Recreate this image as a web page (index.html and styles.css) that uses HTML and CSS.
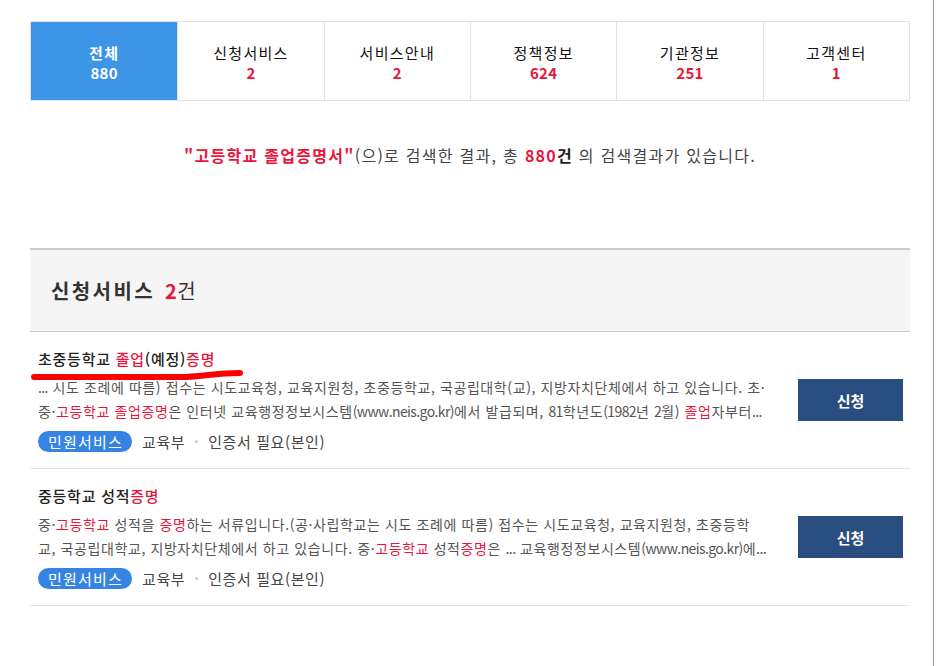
FILE: index.html
```html
<!DOCTYPE html>
<html lang="ko">
  <head>
    <meta charset="UTF-8" />
    <meta name="viewport" content="width=device-width, initial-scale=1.0" />
    <title>통합검색 결과</title>
    <link rel="stylesheet" href="styles.css">
  </head>
  <body>
    <div class="page">
      <div class="wrap">
        <!-- 검색 분류 탭 -->
        <ul class="tabs">
          <li class="tab active"><span class="tab-name">전체</span><span class="tab-count">880</span></li>
          <li class="tab"><span class="tab-name">신청서비스</span><span class="tab-count">2</span></li>
          <li class="tab"><span class="tab-name">서비스안내</span><span class="tab-count">2</span></li>
          <li class="tab"><span class="tab-name">정책정보</span><span class="tab-count">624</span></li>
          <li class="tab"><span class="tab-name">기관정보</span><span class="tab-count">251</span></li>
          <li class="tab"><span class="tab-name">고객센터</span><span class="tab-count">1</span></li>
        </ul>

        <p class="summary">
          <strong class="hl">"고등학교 졸업증명서"</strong>(으)로 검색한 결과, 총 <strong class="hl">880</strong><strong>건</strong> 의 검색결과가 있습니다.
        </p>

        <!-- 신청서비스 결과 -->
        <div class="section-head">
          <h2>신청서비스 <em>2</em><span>건</span></h2>
        </div>

        <ul class="results">
          <li class="result">
            <div class="result-body">
              <h3 class="result-title">초중등학교 <span class="hl">졸업</span>(예정)<span class="hl">증명</span></h3>
              <svg class="mark" width="218" height="16" viewBox="0 0 218 16">
                <path d="M4 11 L150 11 C 170 11, 185 7, 210 7" stroke="#f00" stroke-width="6" fill="none" stroke-linecap="round" />
              </svg>
              <div class="result-desc">
                <p class="line"><span class="en">...</span> 시도 조례에 따름) 접수는 시도교육청, 교육지원청, 초중등학교, 국공립대학(교), 지방자치단체에서 하고 있습니다. 초·</p>
                <p class="line">중·<span class="hl">고등학교</span> <span class="hl">졸업증명</span>은 인터넷 교육행정정보시스템<span class="en">(www.neis.go.kr)</span>에서 발급되며, <span class="en">81</span>학년도<span class="en">(1982</span>년 <span class="en">2</span>월) <span class="hl">졸업</span>자부터<span class="en">...</span></p>
              </div>
              <div class="result-meta">
                <span class="badge">민원서비스</span>
                <span class="meta">교육부</span>
                <span class="dot"></span>
                <span class="meta">인증서 필요(본인)</span>
              </div>
            </div>
            <button class="apply">신청</button>
          </li>
          <li class="result">
            <div class="result-body">
              <h3 class="result-title">중등학교 성적<span class="hl">증명</span></h3>
              <div class="result-desc">
                <p class="line">중·<span class="hl">고등학교</span> 성적을 <span class="hl">증명</span>하는 서류입니다.(공·사립학교는 시도 조례에 따름) 접수는 시도교육청, 교육지원청, 초중등학</p>
                <p class="line">교, 국공립대학교, 지방자치단체에서 하고 있습니다. 중·<span class="hl">고등학교</span> 성적<span class="hl">증명</span>은 <span class="en">...</span> 교육행정정보시스템<span class="en">(www.neis.go.kr)</span>에<span class="en">...</span></p>
              </div>
              <div class="result-meta">
                <span class="badge">민원서비스</span>
                <span class="meta">교육부</span>
                <span class="dot"></span>
                <span class="meta">인증서 필요(본인)</span>
              </div>
            </div>
            <button class="apply">신청</button>
          </li>
        </ul>
      </div>
    </div>
  </body>
</html>
```

FILE: styles.css
```css
* {
  box-sizing: border-box;
}

body {
  margin: 0;
  font-family: "Noto Sans CJK KR", "Noto Sans", sans-serif;
  letter-spacing: 0.08em;
  color: #222;
  background-color: #fff;
}

.page {
  width: 934px;
  min-height: 666px;
  border-right: 1px solid #999;
}

.wrap {
  width: 880px;
  margin-left: 30px;
  padding-top: 21px;
}

ul {
  list-style: none;
  margin: 0;
  padding: 0;
}

.hl {
  color: #e8163c;
}

/* 탭 */
.tabs {
  display: grid;
  grid-template-columns: repeat(6, 1fr);
  height: 80px;
  border: 1px solid #e2e2e2;
}

.tab {
  display: flex;
  flex-direction: column;
  align-items: center;
  justify-content: center;
  padding-top: 4px;
  border-left: 1px solid #e2e2e2;
  font-size: 15px;
  line-height: 20px;
}

.tab:first-child {
  border-left: none;
}

.tab-name {
  color: #111;
}

.tab-count {
  color: #e8163c;
  font-weight: bold;
  letter-spacing: 0.02em;
}

.tab.active {
  background-color: #3d95e8;
}

.tab.active .tab-name,
.tab.active .tab-count {
  color: #fff;
  font-weight: bold;
}

/* 검색 요약 */
.summary {
  margin: 42px 0 0;
  text-align: center;
  font-size: 16px;
  line-height: 24px;
  color: #444;
}

.summary strong {
  color: #222;
}

.summary strong.hl {
  color: #e8163c;
}

/* 섹션 헤더 */
.section-head {
  margin-top: 81px;
  height: 84px;
  padding-left: 21px;
  display: flex;
  align-items: center;
  background-color: #f5f5f5;
  border-top: 2px solid #ccc;
  border-bottom: 1px solid #ccc;
}

.section-head h2 {
  margin: 0;
  font-size: 20px;
  line-height: 28px;
  font-weight: bold;
  letter-spacing: 0.12em;
  color: #333;
}

.section-head em {
  font-style: normal;
  color: #e8163c;
  margin-left: 2px;
  letter-spacing: 0.02em;
}

.section-head span {
  font-weight: normal;
}

/* 결과 목록 */
.result {
  position: relative;
  display: flex;
  align-items: center;
  height: 137px;
  padding: 16px 7px 16px 8px;
  border-bottom: 1px solid #e5e5e5;
}

.result-body {
  width: 728px;
}

.result-title {
  margin: 0;
  font-size: 15px;
  line-height: 20px;
  font-weight: 500;
  letter-spacing: 0.05em;
  color: #222;
}

/* 손으로 그은 밑줄 표시 */
.mark {
  position: absolute;
  left: 0;
  top: 34px;
}

.result-desc {
  margin-top: 6px;
  font-size: 14px;
  line-height: 24px;
  letter-spacing: 0.6px;
  color: #555;
}

.result-desc .en {
  letter-spacing: -0.6px;
}

.line {
  margin: 0;
  white-space: nowrap;
  overflow: hidden;
}

.result-meta {
  display: flex;
  align-items: center;
  margin-top: 8px;
  font-size: 15px;
  letter-spacing: 0.04em;
  color: #444;
}

.badge {
  display: inline-block;
  height: 21px;
  line-height: 21px;
  padding: 0 9px 0 10px;
  border-radius: 11px;
  background-color: #3584e4;
  color: #fff;
  letter-spacing: 0.08em;
}

.meta {
  margin-left: 10px;
}

.dot {
  width: 3px;
  height: 3px;
  margin: 0 0 0 10px;
  border-radius: 50%;
  background-color: #ccc;
}

.apply {
  margin-left: auto;
  width: 105px;
  height: 42px;
  border: none;
  background-color: #2a4d80;
  color: #fff;
  font-family: inherit;
  font-size: 15px;
  font-weight: bold;
  cursor: pointer;
}
```
